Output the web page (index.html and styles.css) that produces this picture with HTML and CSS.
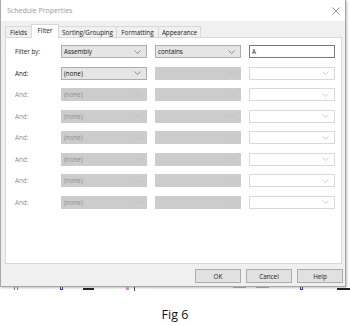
FILE: index.html
```html
<!DOCTYPE html>
<html lang="en">
<head>
  <meta charset="UTF-8" />
  <title>Schedule Properties</title>
  <link rel="stylesheet" href="styles.css">
</head>
<body>

  <div class="dialog">
    <div class="titlebar">
      <span class="title">Schedule Properties</span>
      <svg class="close" width="8" height="8" viewBox="0 0 8 8"><path d="M0.5 0.5 L7.5 7.5 M7.5 0.5 L0.5 7.5" stroke="#8a8a8a" stroke-width="0.9" fill="none"/></svg>
    </div>

    <div class="tabs">
      <span class="tab t1">Fields</span>
      <span class="tab t2 active">Filter</span>
      <span class="tab t3">Sorting/Grouping</span>
      <span class="tab t4">Formatting</span>
      <span class="tab t5">Appearance</span>
    </div>

    <div class="panel">
      <div class="row">
        <span class="label">Filter by:</span>
        <div class="select">Assembly <svg class="chev" width="7" height="4" viewBox="0 0 7 4"><path d="M0.5 0.5 L3.5 3.5 L6.5 0.5" stroke="#777" stroke-width="0.8" fill="none"/></svg></div>
        <div class="select">contains <svg class="chev" width="7" height="4" viewBox="0 0 7 4"><path d="M0.5 0.5 L3.5 3.5 L6.5 0.5" stroke="#777" stroke-width="0.8" fill="none"/></svg></div>
        <div class="textbox">A</div>
      </div>
      <div class="row">
        <span class="label">And:</span>
        <div class="select">(none) <svg class="chev" width="7" height="4" viewBox="0 0 7 4"><path d="M0.5 0.5 L3.5 3.5 L6.5 0.5" stroke="#777" stroke-width="0.8" fill="none"/></svg></div>
        <div class="select off"><svg class="chev" width="7" height="4" viewBox="0 0 7 4"><path d="M0.5 0.5 L3.5 3.5 L6.5 0.5" stroke="#bdbdbd" stroke-width="0.8" fill="none"/></svg></div>
        <div class="select blank"><svg class="chev" width="7" height="4" viewBox="0 0 7 4"><path d="M0.5 0.5 L3.5 3.5 L6.5 0.5" stroke="#c4c4c4" stroke-width="0.8" fill="none"/></svg></div>
      </div>
      <div class="row dim">
        <span class="label">And:</span>
        <div class="select off">(none) <svg class="chev" width="7" height="4" viewBox="0 0 7 4"><path d="M0.5 0.5 L3.5 3.5 L6.5 0.5" stroke="#bdbdbd" stroke-width="0.8" fill="none"/></svg></div>
        <div class="select off"><svg class="chev" width="7" height="4" viewBox="0 0 7 4"><path d="M0.5 0.5 L3.5 3.5 L6.5 0.5" stroke="#bdbdbd" stroke-width="0.8" fill="none"/></svg></div>
        <div class="select blank"><svg class="chev" width="7" height="4" viewBox="0 0 7 4"><path d="M0.5 0.5 L3.5 3.5 L6.5 0.5" stroke="#c4c4c4" stroke-width="0.8" fill="none"/></svg></div>
      </div>
      <div class="row dim">
        <span class="label">And:</span>
        <div class="select off">(none) <svg class="chev" width="7" height="4" viewBox="0 0 7 4"><path d="M0.5 0.5 L3.5 3.5 L6.5 0.5" stroke="#bdbdbd" stroke-width="0.8" fill="none"/></svg></div>
        <div class="select off"><svg class="chev" width="7" height="4" viewBox="0 0 7 4"><path d="M0.5 0.5 L3.5 3.5 L6.5 0.5" stroke="#bdbdbd" stroke-width="0.8" fill="none"/></svg></div>
        <div class="select blank"><svg class="chev" width="7" height="4" viewBox="0 0 7 4"><path d="M0.5 0.5 L3.5 3.5 L6.5 0.5" stroke="#c4c4c4" stroke-width="0.8" fill="none"/></svg></div>
      </div>
      <div class="row dim">
        <span class="label">And:</span>
        <div class="select off">(none) <svg class="chev" width="7" height="4" viewBox="0 0 7 4"><path d="M0.5 0.5 L3.5 3.5 L6.5 0.5" stroke="#bdbdbd" stroke-width="0.8" fill="none"/></svg></div>
        <div class="select off"><svg class="chev" width="7" height="4" viewBox="0 0 7 4"><path d="M0.5 0.5 L3.5 3.5 L6.5 0.5" stroke="#bdbdbd" stroke-width="0.8" fill="none"/></svg></div>
        <div class="select blank"><svg class="chev" width="7" height="4" viewBox="0 0 7 4"><path d="M0.5 0.5 L3.5 3.5 L6.5 0.5" stroke="#c4c4c4" stroke-width="0.8" fill="none"/></svg></div>
      </div>
      <div class="row dim">
        <span class="label">And:</span>
        <div class="select off">(none) <svg class="chev" width="7" height="4" viewBox="0 0 7 4"><path d="M0.5 0.5 L3.5 3.5 L6.5 0.5" stroke="#bdbdbd" stroke-width="0.8" fill="none"/></svg></div>
        <div class="select off"><svg class="chev" width="7" height="4" viewBox="0 0 7 4"><path d="M0.5 0.5 L3.5 3.5 L6.5 0.5" stroke="#bdbdbd" stroke-width="0.8" fill="none"/></svg></div>
        <div class="select blank"><svg class="chev" width="7" height="4" viewBox="0 0 7 4"><path d="M0.5 0.5 L3.5 3.5 L6.5 0.5" stroke="#c4c4c4" stroke-width="0.8" fill="none"/></svg></div>
      </div>
      <div class="row dim">
        <span class="label">And:</span>
        <div class="select off">(none) <svg class="chev" width="7" height="4" viewBox="0 0 7 4"><path d="M0.5 0.5 L3.5 3.5 L6.5 0.5" stroke="#bdbdbd" stroke-width="0.8" fill="none"/></svg></div>
        <div class="select off"><svg class="chev" width="7" height="4" viewBox="0 0 7 4"><path d="M0.5 0.5 L3.5 3.5 L6.5 0.5" stroke="#bdbdbd" stroke-width="0.8" fill="none"/></svg></div>
        <div class="select blank"><svg class="chev" width="7" height="4" viewBox="0 0 7 4"><path d="M0.5 0.5 L3.5 3.5 L6.5 0.5" stroke="#c4c4c4" stroke-width="0.8" fill="none"/></svg></div>
      </div>
      <div class="row dim">
        <span class="label">And:</span>
        <div class="select off">(none) <svg class="chev" width="7" height="4" viewBox="0 0 7 4"><path d="M0.5 0.5 L3.5 3.5 L6.5 0.5" stroke="#bdbdbd" stroke-width="0.8" fill="none"/></svg></div>
        <div class="select off"><svg class="chev" width="7" height="4" viewBox="0 0 7 4"><path d="M0.5 0.5 L3.5 3.5 L6.5 0.5" stroke="#bdbdbd" stroke-width="0.8" fill="none"/></svg></div>
        <div class="select blank"><svg class="chev" width="7" height="4" viewBox="0 0 7 4"><path d="M0.5 0.5 L3.5 3.5 L6.5 0.5" stroke="#c4c4c4" stroke-width="0.8" fill="none"/></svg></div>
      </div>
    </div>

    <div class="buttons">
      <span class="btn">OK</span>
      <span class="btn">Cancel</span>
      <span class="btn">Help</span>
    </div>
  </div>

  <!-- bits of the drawing behind the dialog -->
  <div class="strip">
    <span class="mark gray"></span>
    <span class="mark blue"></span>
    <span class="mark line"></span>
    <span class="mark pink"></span>
    <span class="mark thin"></span>
    <span class="mark wide"></span>
    <span class="mark wide"></span>
    <span class="mark blue2"></span>
    <span class="mark line2"></span>
  </div>

  <p class="caption">Fig 6</p>

</body>
</html>
```

FILE: styles.css
```css
body {
  margin: 0;
  background-color: #fff;
  font-family: "Open Sans", "Noto Sans", sans-serif;
  width: 350px;
}

.dialog {
  width: 346px;
  height: 287px;
  box-sizing: border-box;
  border: 1px solid #a8a8a8;
  border-top: none;
  background-color: #f0f0f0;
  display: flex;
  flex-direction: column;
  box-shadow: 1px 1px 2px rgba(0, 0, 0, 0.25);
}

.titlebar {
  height: 21px;
  background-color: #fff;
  display: flex;
  align-items: center;
  justify-content: space-between;
  padding: 0 5px 0 6px;
}

.title {
  font-size: 7px;
  color: #9a9a9a;
}

.close {
  display: block;
}

.tabs {
  display: flex;
  align-items: flex-end;
  height: 16px;
  padding-left: 4px;
}

.tab {
  font-size: 6.3px;
  color: #222;
  height: 11px;
  line-height: 11px;
  box-sizing: border-box;
  border: 1px solid #d9d9d9;
  border-bottom: none;
  margin-right: -1px;
  background-color: #f0f0f0;
  text-align: center;
}

.t1 { width: 27px; }
.t2 { width: 28px; }
.t3 { width: 59px; }
.t4 { width: 43px; }
.t5 { width: 43px; }

.tab.active {
  background-color: #fff;
  height: 14px;
  line-height: 11px;
  position: relative;
  margin-bottom: -1px;
  z-index: 1;
}

.panel {
  height: 227px;
  box-sizing: border-box;
  margin: 0 3px 0 4px;
  background-color: #fff;
  border: 1px solid #d9d9d9;
  padding: 7px 0 0 9px;
  display: flex;
  flex-direction: column;
  gap: 8.5px;
}

.row {
  display: grid;
  grid-template-columns: 38px 86px 86px 86px;
  column-gap: 8px;
  align-items: center;
  height: 13px;
}

.label {
  font-size: 6.3px;
  color: #222;
}

.select, .textbox {
  height: 13px;
  box-sizing: border-box;
  font-size: 6.3px;
  line-height: 11px;
  padding: 0 2px;
  color: #111;
  display: flex;
  align-items: center;
  justify-content: space-between;
}

.select {
  background-color: #e5e5e5;
  border: 1px solid #adadad;
}

.select.off {
  background-color: #cccccc;
  border-color: #cccccc;
}

.select.blank {
  background-color: #fff;
  border-color: #d9d9d9;
  justify-content: flex-end;
}

.select.off svg:only-child {
  margin-left: auto;
}

.chev {
  flex: none;
  margin-right: 3px;
}

.textbox {
  background-color: #fff;
  border: 1px solid #7a7a7a;
}

.dim .label,
.dim .select {
  color: #8c8c8c;
}

.buttons {
  display: flex;
  justify-content: flex-end;
  gap: 5px;
  padding: 5px 2px 0 0;
}

.btn {
  width: 46px;
  height: 14px;
  box-sizing: border-box;
  border: 1px solid #adadad;
  background-color: #e1e1e1;
  font-size: 6.3px;
  color: #222;
  display: flex;
  align-items: center;
  justify-content: center;
}

.strip {
  display: flex;
  align-items: flex-start;
  height: 8px;
  padding-left: 14px;
}

.mark {
  display: block;
  height: 3px;
}

.mark.gray { width: 4px; border-left: 1px solid #777; border-right: 1px solid #777; box-sizing: border-box; margin-right: 42px; }
.mark.blue { width: 4px; border: 1px solid #3333cc; border-top: none; box-sizing: border-box; margin-right: 20px; }
.mark.line { width: 14px; height: 2px; background-color: #222; margin-top: 1px; margin-right: 32px; }
.mark.pink { width: 4px; background-color: #e07be0; margin-right: 5px; }
.mark.thin { width: 1px; height: 4px; background-color: #444; margin-right: 98px; }
.mark.wide { width: 16px; height: 2px; border-top: 1px solid #999; margin-right: 10px; }
.mark.blue2 { width: 4px; border: 1px solid #3333cc; border-top: none; box-sizing: border-box; margin-left: 21px; margin-right: 34px; }
.mark.line2 { width: 16px; height: 2px; background-color: #222; margin-top: 1px; }

.caption {
  margin: 11px 0 0;
  text-align: center;
  font-size: 12.5px;
  color: #111;
}
```
